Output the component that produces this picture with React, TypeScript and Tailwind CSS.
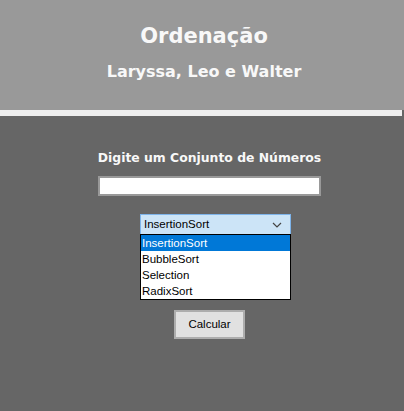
import React from 'react'

const options = ['InsertionSort', 'BubbleSort', 'Selection', 'RadixSort']

export default function App() {
  return (
    <div className="w-[404px] h-[411px] bg-[#666666] font-['DejaVu_Sans',sans-serif]">
      <header className="h-[110px] bg-[#999999] flex flex-col items-center pt-[22px] pl-[4px] text-[#f8f8f8] font-bold">
        <h1 className="text-[21px] leading-[28px]">Ordenação</h1>
        <h2 className="text-[16px] leading-[22px] mt-[11px]">Laryssa, Leo e Walter</h2>
      </header>
      <div className="h-[6px] bg-[#eeeeee] mr-[2px]" />

      <div className="flex flex-col items-center pt-[33px] pl-[15px]">
        <p className="text-[12.4px] font-bold text-[#f8f8f8] leading-[18px]">Digite um Conjunto de Números</p>
        <input
          type="text"
          className="mt-[9px] w-[223px] h-[20px] bg-white border-2 border-[#999999] outline-none"
        />

        <div className="mt-[18px] ml-[12px] w-[151px] font-['Liberation_Sans',sans-serif] text-[11.5px] text-black">
          <div className="h-[20px] bg-[#cce4f7] border border-[#7eb4ea] border-b-0 flex items-center justify-between pl-[3px] pr-[8px]">
            <span>InsertionSort</span>
            <svg width="10" height="6" viewBox="0 0 10 6" fill="none" stroke="#444" strokeWidth="1.2">
              <path d="M1 1 L5 5 L9 1" />
            </svg>
          </div>
          <ul className="border border-black bg-white">
            {options.map((o, i) => (
              <li
                key={o}
                className={`h-[16px] leading-[16px] pl-[1px] ${i === 0 ? 'bg-[#0078d7] text-white' : ''}`}
              >
                {o}
              </li>
            ))}
          </ul>
        </div>

        <button className="mt-[10px] w-[71px] h-[29px] bg-[#e1e1e1] border-2 border-[#adadad] font-['Liberation_Sans',sans-serif] text-[11.5px] text-black">
          Calcular
        </button>
      </div>
    </div>
  )
}
